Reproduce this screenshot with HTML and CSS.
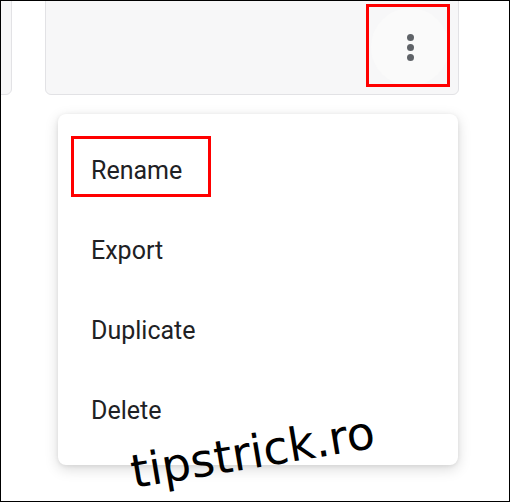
FILE: index.html
```html
<!DOCTYPE html>
<html>
<head>
<meta charset="utf-8">
<link rel="stylesheet" href="styles.css">
</head>
<body>
<div class="frame">
  <div class="cards">
    <div class="card card-left"></div>
    <div class="card card-main">
      <div class="kebab">
        <span class="dot"></span><span class="dot"></span><span class="dot"></span>
      </div>
      <div class="mark mark-kebab"></div>
    </div>
  </div>
  <div class="menu">
    <div class="item">Rename</div>
    <div class="item">Export</div>
    <div class="item">Duplicate</div>
    <div class="item">Delete</div>
    <div class="mark mark-rename"></div>
  </div>
  <div class="watermark">tipstrick.ro</div>
</div>
</body>
</html>
```

FILE: styles.css
```css
html, body {
  margin: 0;
  padding: 0;
  background: #fff;
}
.frame {
  position: relative;
  width: 510px;
  height: 502px;
  box-sizing: border-box;
  border: 1px solid #000;
  overflow: hidden;
  background: #fff;
}
.cards {
  display: flex;
  gap: 33px;
  margin-top: -31px;
  margin-left: -90px;
}
.card {
  height: 125px;
  box-sizing: border-box;
  border: 1px solid #e2e2e5;
  border-radius: 6px;
  background: #f7f7f8;
  flex: none;
}
.card-left {
  width: 101px;
}
.card-main {
  position: relative;
  width: 414px;
  display: flex;
  justify-content: flex-end;
  align-items: flex-end;
  padding: 0 10px 10px 0;
}
.kebab {
  width: 78px;
  height: 78px;
  margin-right: -1px;
  margin-bottom: -2px;
  border-radius: 50%;
  background: #fafafa;
  display: flex;
  flex-direction: column;
  align-items: center;
  justify-content: center;
  gap: 3px;
}
.dot {
  width: 7px;
  height: 7px;
  border-radius: 50%;
  background: #5f6368;
}
.mark {
  position: absolute;
  border: 3px solid #ff0000;
  box-sizing: border-box;
}
.mark-kebab {
  left: 320px;
  top: 33px;
  width: 84px;
  height: 83px;
}
.menu {
  position: relative;
  margin: 19px 0 0 57px;
  width: 400px;
  height: 351px;
  box-sizing: border-box;
  padding: 16px 0 15px;
  background: #fff;
  border-radius: 8px;
  box-shadow: 0 4px 14px rgba(0,0,0,0.15), 0 1px 4px rgba(0,0,0,0.08);
}
.item {
  height: 80px;
  display: flex;
  align-items: center;
  padding-left: 33px;
  font-family: Roboto, "Liberation Sans", sans-serif;
  font-size: 25px;
  color: #202124;
}
.mark-rename {
  left: 13px;
  top: 22px;
  width: 140px;
  height: 61px;
}
.watermark {
  position: absolute;
  left: 134px;
  top: 448px;
  font-family: "DejaVu Sans", sans-serif;
  font-size: 46px;
  color: #000;
  transform: rotate(-9.5deg);
  transform-origin: left bottom;
  line-height: 1;
}
```
